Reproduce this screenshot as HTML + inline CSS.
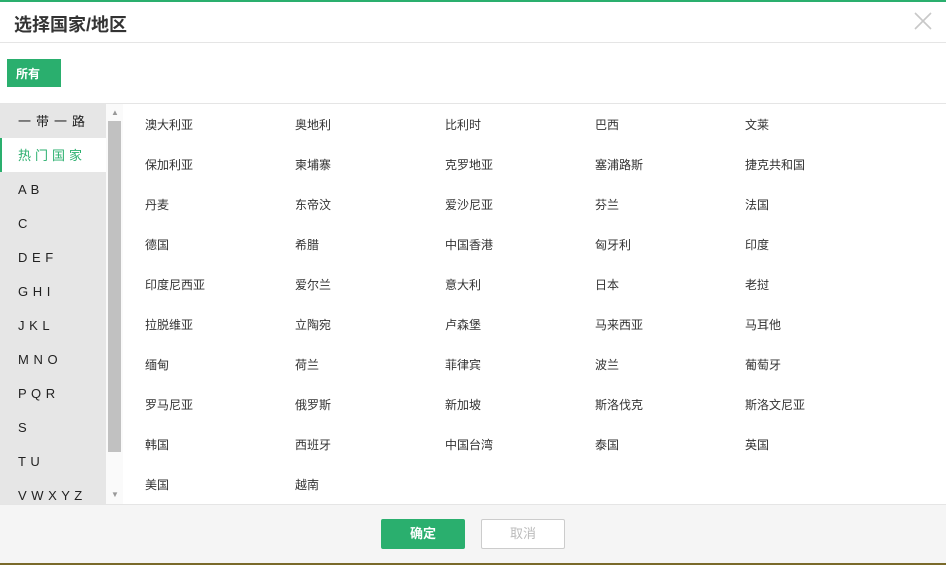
<!DOCTYPE html>
<html><head><meta charset="utf-8"><style>
*{margin:0;padding:0;box-sizing:border-box}
body{width:946px;height:565px;overflow:hidden;background:#fff;font-family:"Liberation Sans","Noto Sans CJK SC",sans-serif;position:relative;color:#333}
.top{position:absolute;left:0;top:0;width:946px;height:2px;background:#2aaf6e}
.title{position:absolute;left:14px;top:11px;font-size:18px;font-weight:bold;color:#333}
.close{position:absolute;left:914px;top:12px}
.hl{position:absolute;left:0;width:946px;height:1px;background:#e5e5e5}
.all{position:absolute;left:7px;top:59px;width:54px;height:28px;background:#2aaf6e;color:#fff;font-size:12px;font-weight:bold;padding:6px 0 0 9px}
.side{position:absolute;left:0;top:104px;width:106px;height:400px;background:#e6e6e6}
.side div{height:34px;line-height:35px;padding-left:18px;font-size:13px;color:#222;word-spacing:1px}
.side .on{background:#fff;color:#2aaf6e;border-left:2px solid #2aaf6e;padding-left:16px;letter-spacing:4px}
.side .yd{letter-spacing:5px}
.sb{position:absolute;left:106px;top:104px;width:17px;height:400px;background:#fafafa}
.thumb{position:absolute;left:108px;top:121px;width:13px;height:331px;background:#c1c1c1}
.ar{position:absolute;left:111px;font-size:8px;color:#999}
.grid{position:absolute;left:145px;top:116px;font-size:12px;color:#333}
.grid span{position:absolute;white-space:nowrap}
.foot{position:absolute;left:0;top:504px;width:946px;height:59px;background:#f5f5f5;border-top:1px solid #e5e5e5}
.ok{position:absolute;left:381px;top:519px;width:84px;height:30px;background:#2aaf6e;color:#fff;font-size:13px;font-weight:bold;text-align:center;line-height:30px;border-radius:2px}
.cn{position:absolute;left:481px;top:519px;width:84px;height:30px;background:#fff;border:1px solid #ccc;color:#bbb;font-size:13px;text-align:center;line-height:28px;border-radius:2px}
.bot{position:absolute;left:0;top:563px;width:946px;height:2px;background:#7a6a2a}
</style></head><body>
<div class="top"></div>
<div class="title">选择国家/地区</div>
<svg class="close" width="18" height="18" viewBox="0 0 18 18"><path d="M1 1L17 17M17 1L1 17" stroke="#c8c8c8" stroke-width="1.6"/></svg>
<div class="hl" style="top:42px"></div>
<div class="all">所有</div>
<div class="hl" style="top:103px"></div>
<div class="side">
<div class="yd">一带一路</div><div class="on">热门国家</div><div>A B</div><div>C</div><div>D E F</div><div>G H I</div><div>J K L</div><div>M N O</div><div>P Q R</div><div>S</div><div>T U</div><div>V W X Y Z</div>
</div>
<div class="sb"></div><div class="thumb"></div>
<div class="ar" style="top:108px">▲</div><div class="ar" style="top:490px">▼</div>
<div class="grid">
<span style="left:0;top:0">澳大利亚</span><span style="left:150px;top:0">奥地利</span><span style="left:300px;top:0">比利时</span><span style="left:450px;top:0">巴西</span><span style="left:600px;top:0">文莱</span>
<span style="left:0;top:40px">保加利亚</span><span style="left:150px;top:40px">柬埔寨</span><span style="left:300px;top:40px">克罗地亚</span><span style="left:450px;top:40px">塞浦路斯</span><span style="left:600px;top:40px">捷克共和国</span>
<span style="left:0;top:80px">丹麦</span><span style="left:150px;top:80px">东帝汶</span><span style="left:300px;top:80px">爱沙尼亚</span><span style="left:450px;top:80px">芬兰</span><span style="left:600px;top:80px">法国</span>
<span style="left:0;top:120px">德国</span><span style="left:150px;top:120px">希腊</span><span style="left:300px;top:120px">中国香港</span><span style="left:450px;top:120px">匈牙利</span><span style="left:600px;top:120px">印度</span>
<span style="left:0;top:160px">印度尼西亚</span><span style="left:150px;top:160px">爱尔兰</span><span style="left:300px;top:160px">意大利</span><span style="left:450px;top:160px">日本</span><span style="left:600px;top:160px">老挝</span>
<span style="left:0;top:200px">拉脱维亚</span><span style="left:150px;top:200px">立陶宛</span><span style="left:300px;top:200px">卢森堡</span><span style="left:450px;top:200px">马来西亚</span><span style="left:600px;top:200px">马耳他</span>
<span style="left:0;top:240px">缅甸</span><span style="left:150px;top:240px">荷兰</span><span style="left:300px;top:240px">菲律宾</span><span style="left:450px;top:240px">波兰</span><span style="left:600px;top:240px">葡萄牙</span>
<span style="left:0;top:280px">罗马尼亚</span><span style="left:150px;top:280px">俄罗斯</span><span style="left:300px;top:280px">新加坡</span><span style="left:450px;top:280px">斯洛伐克</span><span style="left:600px;top:280px">斯洛文尼亚</span>
<span style="left:0;top:320px">韩国</span><span style="left:150px;top:320px">西班牙</span><span style="left:300px;top:320px">中国台湾</span><span style="left:450px;top:320px">泰国</span><span style="left:600px;top:320px">英国</span>
<span style="left:0;top:360px">美国</span><span style="left:150px;top:360px">越南</span>
</div>
<div class="foot"></div>
<div class="ok">确定</div><div class="cn">取消</div>
<div class="bot"></div>
</body></html>
